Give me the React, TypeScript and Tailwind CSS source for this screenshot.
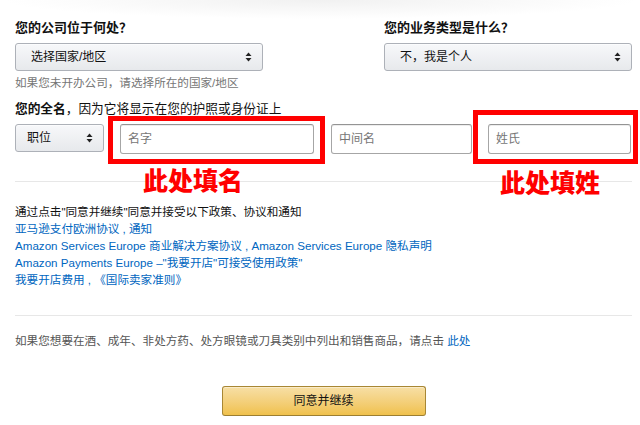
import React from 'react';

const SelectArrows = () => (
  <svg width="7" height="10" viewBox="0 0 7 10" className="shrink-0">
    <path d="M3.5 0.5 L6.5 4 L0.5 4 Z" fill="#222" />
    <path d="M0.5 6 L6.5 6 L3.5 9.5 Z" fill="#222" />
  </svg>
);

interface SelectBoxProps {
  text: string;
  className?: string;
  textClass?: string;
}

const SelectBox = ({ text, className = '', textClass = '' }: SelectBoxProps) => (
  <div
    className={`flex h-[28px] items-center justify-between rounded-[3px] border border-[#adb1b8] bg-gradient-to-b from-[#f7f8fa] to-[#e7e9ec] pr-[10px] shadow-[0_1px_0_rgba(255,255,255,0.6)_inset] ${className}`}
  >
    <span className={`text-[12px] text-[#111] ${textClass}`}>{text}</span>
    <SelectArrows />
  </div>
);

const TextField = ({ placeholder, className = '' }: { placeholder: string; className?: string }) => (
  <div
    className={`flex h-[30px] items-center rounded-[3px] border border-[#a6a6a6] border-t-[#949494] pl-[7px] shadow-[0_1px_0_rgba(255,255,255,0.5),0_1px_0_rgba(0,0,0,0.07)_inset] ${className}`}
  >
    <span className="text-[12px] text-[#767676]">{placeholder}</span>
  </div>
);

export default function App() {
  return (
    <div className="relative h-[425px] w-[640px] overflow-hidden bg-white font-['Liberation_Sans','Noto_Sans_CJK_SC',sans-serif]">
      {/* faint shade along the top edge */}
      <div className="h-[19px] bg-[radial-gradient(ellipse_at_top,#f1f1f1_0%,#ffffff_70%)]" />

      <div className="pl-[15px] pr-[8px]">
        <div className="flex justify-between">
          <div className="w-[248px]">
            <div className="font-['Noto_Sans_CJK_SC',sans-serif] text-[13px] font-bold leading-[16px] text-[#111]">您的公司位于何处？</div>
            <SelectBox text="选择国家/地区" className="mt-[8px]" textClass="pl-[15px]" />
            <div className="mt-[4px] text-[11.6px] leading-[16px] text-[#767676]">
              如果您未开办公司，请选择所在的国家/地区
            </div>
          </div>
          <div className="w-[248px]">
            <div className="font-['Noto_Sans_CJK_SC',sans-serif] text-[13px] font-bold leading-[16px] text-[#111]">您的业务类型是什么？</div>
            <SelectBox text="不，我是个人" className="mt-[8px]" textClass="pl-[15px]" />
          </div>
        </div>

        <div className="mt-[10px] text-[12.7px] leading-[16px] text-[#111]">
          <span className="font-bold">您的全名</span>，因为它将显示在您的护照或身份证上
        </div>

        <div className="relative mt-[7px] flex items-start">
          <SelectBox text="职位" className="w-[89px]" textClass="pl-[11px]" />
          <TextField placeholder="名字" className="ml-[16px] w-[194px]" />
          <TextField placeholder="中间名" className="ml-[17px] w-[141px]" />
          <TextField placeholder="姓氏" className="ml-[16px] w-[143px]" />

          {/* red annotation boxes */}
          <div className="absolute left-[93px] top-[-8px] h-[48px] w-[217px] border-[5px] border-[#ff0000]" />
          <div className="absolute left-[458px] top-[-14px] h-[54px] w-[165px] border-[5px] border-[#ff0000]" />
        </div>

        <div className="relative mt-[27px] h-px bg-[#e7e7e7]">
          <div className="absolute left-[128px] top-[-14px] text-[25px] font-black leading-[28px] text-[#ff0000]">
            此处填名
          </div>
          <div className="absolute left-[485px] top-[-12px] text-[25px] font-black leading-[28px] text-[#ff0000]">
            此处填姓
          </div>
        </div>

        <div className="mt-[21px] text-[11.6px] leading-[17px]">
          <div className="text-[#111]">通过点击"同意并继续"同意并接受以下政策、协议和通知</div>
          <div className="text-[#0066c0]">亚马逊支付欧洲协议 , 通知</div>
          <div className="text-[#0066c0]">Amazon Services Europe 商业解决方案协议 , Amazon Services Europe 隐私声明</div>
          <div className="text-[#0066c0]">Amazon Payments Europe –"我要开店"可接受使用政策"</div>
          <div className="text-[#0066c0]">我要开店费用 , 《国际卖家准则》</div>
        </div>

        <div className="mt-[27px] h-px bg-[#e7e7e7]" />

        <div className="mt-[17px] text-[11.6px] leading-[16px] text-[#555]">
          如果您想要在酒、成年、非处方药、处方眼镜或刀具类别中列出和销售商品，请点击 <span className="text-[#0066c0]">此处</span>
        </div>

        <div className="mt-[37px] flex justify-center">
          <div className="flex h-[30px] w-[204px] items-center justify-center rounded-[3px] border border-[#a88734] border-b-[#9c7e31] bg-gradient-to-b from-[#f7dfa5] to-[#f0c14b] shadow-[0_1px_0_rgba(255,255,255,0.4)_inset]">
            <span className="text-[12px] text-[#111]">同意并继续</span>
          </div>
        </div>
      </div>
    </div>
  );
}
